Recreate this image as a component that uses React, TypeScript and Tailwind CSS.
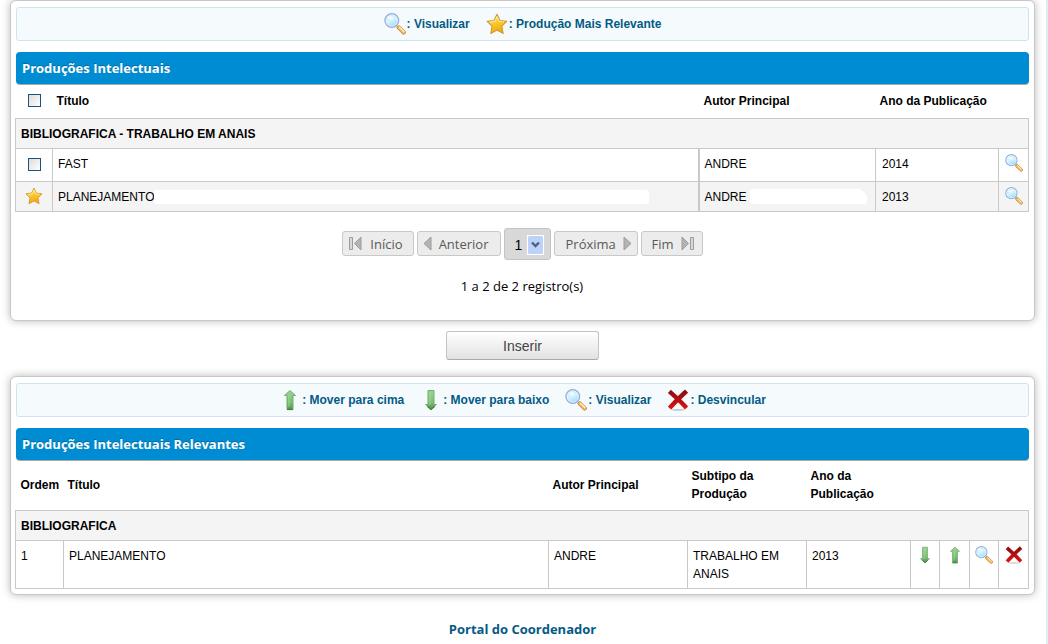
import { useId, type ReactNode } from "react";

type IconProps = { className?: string };

function Magnifier({ className = "size-[22px]" }: IconProps) {
  const id = useId();
  return (
    <svg viewBox="0 0 22 22" className={className} aria-hidden="true">
      <defs>
        <linearGradient id={`${id}g`} x1="0" y1="0" x2="0.5" y2="1">
          <stop offset="0" stopColor="#a9defa" />
          <stop offset="0.55" stopColor="#d9f3ff" />
          <stop offset="1" stopColor="#a4dcf8" />
        </linearGradient>
      </defs>
      <path d="M13 13.2l2 2" stroke="#9a9a9a" strokeWidth="2" />
      <path d="M14.8 14.6l5 4.8" stroke="#c28a4a" strokeWidth="4.2" strokeLinecap="round" />
      <path d="M15 14.6l4.8 4.7" stroke="#f6bf62" strokeWidth="2.8" strokeLinecap="round" />
      <path d="M15.6 14.4l4.300 4.100" stroke="#fff0cf" strokeWidth="1.2" strokeLinecap="round" />
      <circle cx="7.800" cy="7.500" r="6.800" fill={`url(#${id}g)`} stroke="#93add6" strokeWidth="1.400" />
      <circle cx="7.800" cy="7.500" r="5.800" fill="none" stroke="#eef8ff" strokeWidth="0.7" />
      <ellipse cx="6.400" cy="4.700" rx="3" ry="1.900" fill="#ffffff" opacity="0.65" />
    </svg>
  );
}

function Star({ className = "size-[22px]" }: IconProps) {
  const id = useId();
  return (
    <svg viewBox="0 0 22 22" className={className} aria-hidden="true">
      <defs>
        <linearGradient id={`${id}s`} x1="0" y1="0" x2="0.3" y2="1">
          <stop offset="0" stopColor="#ffe98a" />
          <stop offset="0.5" stopColor="#fccb2f" />
          <stop offset="1" stopColor="#f5a80c" />
        </linearGradient>
      </defs>
      <path
        d="M11 1.3l2.9 6.2 6.9.9-5 4.8 1.4 7.3-6.2-3.5-6.2 3.5 1.3-7.3-5-4.8 6.9-.9z"
        fill={`url(#${id}s)`}
        stroke="#cf9a3a"
        strokeWidth="1.1"
        strokeLinejoin="round"
      />
      <path d="M11 3.6l2.1 4.8 5 .7M11 3.6L8.9 8.4l-5 .7" fill="none" stroke="#fff3b8" strokeWidth="0.8" />
    </svg>
  );
}

function Arrow({ className = "size-[22px]", down = false }: IconProps & { down?: boolean }) {
  const id = useId();
  return (
    <svg viewBox="0 0 22 22" className={className} aria-hidden="true">
      <defs>
        <linearGradient id={`${id}a`} x1="0" y1="0" x2="0" y2="1">
          <stop offset="0" stopColor="#9ad693" />
          <stop offset="0.6" stopColor="#7cc075" />
          <stop offset="1" stopColor="#4c984a" />
        </linearGradient>
      </defs>
      <path
        d={down ? "M8 1.500h6v14h2.500L11 20.500 5.500 15.500H8z" : "M11 1.500L16.500 6.500H14v14H8v-14H5.500z"}
        fill={`url(#${id}a)`}
        stroke="#76ad70"
        strokeWidth="1"
        strokeLinejoin="round"
      />
      <path d={down ? "M10 3v13" : "M10 6v12"} stroke="#a9dca2" strokeWidth="1" opacity="0.8" />
      <path d={down ? "M7.500 17.500L11 20.500 14.500 17.500" : "M8 20.500h6"} fill="none" stroke="#3f7f41" strokeWidth="1.200" />
    </svg>
  );
}

function Cross({ className = "size-[22px]" }: IconProps) {
  const id = useId();
  return (
    <svg viewBox="0 0 22 22" className={className} aria-hidden="true">
      <defs>
        <linearGradient id={`${id}x`} gradientUnits="userSpaceOnUse" x1="0" y1="2" x2="0" y2="19">
          <stop offset="0" stopColor="#8d0f12" />
          <stop offset="0.5" stopColor="#b50d10" />
          <stop offset="1" stopColor="#dc1212" />
        </linearGradient>
      </defs>
      <ellipse cx="11" cy="20.800" rx="7" ry="0.900" fill="#000000" opacity="0.2" />
      <path
        d="M4 3.800c4 3.500 10 9 14 13.500M18 3.500C13 8 8.500 12.500 4 17.500"
        fill="none"
        stroke={`url(#${id}x)`}
        strokeWidth="4.400"
        strokeLinecap="square"
      />
    </svg>
  );
}

function PagerArrow({ dir, bar = false }: { dir: "left" | "right"; bar?: boolean }) {
  return (
    <svg
      viewBox={bar ? "0 0 14 16" : "0 0 9 16"}
      className={bar ? "h-4 w-[14px]" : "h-4 w-[9px]"}
      aria-hidden="true"
    >
      <g fill="#b4b4b4" stroke="#9c9c9c" strokeWidth="1" strokeLinejoin="round">
        {bar && <path d={dir === "left" ? "M1.500 1.500h3v12h-3z" : "M9.500 1.500h3v12h-3z"} fill="#d8d8d8" />}
        {dir === "left" ? (
          <path d={bar ? "M13 1v13L6.500 7.500z" : "M8 1v13L1 7.500z"} />
        ) : (
          <path d={bar ? "M1 1v13l6.500-6.500z" : "M1 1v13l7-6.500z"} />
        )}
      </g>
    </svg>
  );
}

function Panel({ children, className }: { children: ReactNode; className: string }) {
  return (
    <section
      className={`ml-[10px] mr-[11px] rounded-md border border-[#c8c8c8] bg-white pl-1 pr-[5px] pt-[6px] shadow-[0_0_9px_rgba(0,0,0,0.28)] ${className}`}
    >
      {children}
    </section>
  );
}

function Legend({ items }: { items: { icon: ReactNode; text: string }[] }) {
  return (
    <ul className="ml-px flex h-[34px] items-center justify-center gap-4 rounded-[3px] border border-[#d0e3ef] bg-[#f5fafd] font-bold text-[#045a85]">
      {items.map((item) => (
        <li key={item.text} className="flex items-center gap-px">
          {item.icon}
          <span>: {item.text}</span>
        </li>
      ))}
    </ul>
  );
}

function Title({ children }: { children: ReactNode }) {
  return (
    <h2 className="ml-px mt-[11px] h-8 rounded-[4px] bg-[#008cd2] px-[6px] font-['Open_Sans',sans-serif] text-[13px] leading-8 font-bold text-white shadow-[0_1px_0_#a9a9a9] [text-shadow:0_-1px_0_rgba(0,0,0,0.25)]">
      {children}
    </h2>
  );
}

const cell = "border border-[#c9c9c9] px-[5px] align-top leading-[18px]";
const iconButton = "mx-auto block cursor-pointer";
const pagerButton =
  "flex h-[25px] items-center rounded-[3px] border border-[#c8c8c8] bg-[#ececec] text-[#5a5a5a]";
const pagerText = "pt-[3px]";
const checkbox =
  "mx-auto block size-[13px] appearance-none border border-[#1c5180] bg-linear-to-br from-[#dcdcd7] to-white checked:from-[#1c5180]";

function View() {
  return (
    <button type="button" aria-label="Visualizar" className={iconButton}>
      <Magnifier className="size-[18px]" />
    </button>
  );
}

export default function App() {
  return (
    <main className="min-h-screen border-r-2 border-[#e2ebf5] bg-white font-['Liberation_Sans',Arial,sans-serif] text-[12px] text-black">
      <Panel className="h-[321px]">
        <Legend
          items={[
            { icon: <Magnifier />, text: "Visualizar" },
            { icon: <Star />, text: "Produção Mais Relevante" },
          ]}
        />
        <Title>Produções Intelectuais</Title>
        <table className="w-full table-fixed border-collapse text-left">
          <colgroup>
            <col className="w-[37px]" />
            <col />
            <col className="w-[177px]" />
            <col className="w-[123px]" />
            <col className="w-[30px]" />
          </colgroup>
          <thead>
            <tr className="h-[34px]">
              <th>
                <input type="checkbox" aria-label="Selecionar todos" className={checkbox} />
              </th>
              <th className="px-1">Título</th>
              <th className="px-[5px]">Autor Principal</th>
              <th className="px-1">Ano da Publicação</th>
              <td />
            </tr>
          </thead>
          <tbody>
            <tr className="h-[30px] bg-[#f4f4f4]">
              <th colSpan={5} className="border border-[#c9c9c9] px-[5px] pt-[2px]">
                BIBLIOGRAFICA - TRABALHO EM ANAIS
              </th>
            </tr>
            <tr className="h-[33px]">
              <td className="border border-[#c9c9c9]">
                <input type="checkbox" aria-label="Selecionar FAST" className={checkbox} />
              </td>
              <td className={`${cell} border-r-2 pt-[6px]`}>FAST</td>
              <td className={`${cell} border-l-2 pt-[6px]`}>ANDRE</td>
              <td className={`${cell} pt-[6px] pl-[6px]`}>2014</td>
              <td className="border border-[#c9c9c9] align-top pt-[5px]">
                <View />
              </td>
            </tr>
            <tr className="h-[30px] bg-[#f4f4f4]">
              <td className="border border-[#c9c9c9]">
                <Star className="mx-auto block size-[18px]" />
              </td>
              <td className={`${cell} border-r-2 pt-[6px]`}>
                <div className="flex items-center pr-11">
                  PLANEJAMENTO
                  <span className="h-[14px] grow rounded-[3px] bg-white" />
                </div>
              </td>
              <td className={`${cell} border-l-2 pt-[6px]`}>
                <div className="flex items-center gap-[3px] pr-[3px]">
                  ANDRE
                  <span className="h-[15px] grow rounded-[3px] rounded-tr-[10px] bg-white" />
                </div>
              </td>
              <td className={`${cell} pt-[6px] pl-[6px]`}>2013</td>
              <td className="border border-[#c9c9c9] align-top pt-[5px]">
                <View />
              </td>
            </tr>
          </tbody>
        </table>

        <nav
          aria-label="Paginação"
          className="mt-4 flex items-center justify-center gap-[3px] font-['Open_Sans',sans-serif] text-[13px]"
        >
          <button type="button" className={`${pagerButton} w-[72px] justify-between pl-[5px] pr-[10px]`}>
            <PagerArrow dir="left" bar />
            <span className={pagerText}>Início</span>
          </button>
          <button type="button" className={`${pagerButton} w-[84px] justify-between pl-[5px] pr-[11px]`}>
            <PagerArrow dir="left" />
            <span className={pagerText}>Anterior</span>
          </button>
          <div className="relative h-8 w-[47px]">
            <select
              aria-label="Página"
              className="h-full w-full appearance-none rounded-[3px] border border-[#c4c4c4] bg-[#d8d8d8] pt-[3px] pl-[10px] font-['Liberation_Sans',Arial,sans-serif] text-[14px]"
            >
              <option>1</option>
            </select>
            <svg viewBox="0 0 17 20" className="pointer-events-none absolute top-[7px] right-[7px] h-5 w-[17px]" aria-hidden="true">
              <rect width="17" height="20" fill="#ffffff" />
              <rect x="1" y="1" width="15" height="18" rx="1.500" fill="#bcd2fb" />
              <path d="M5 7.500l3.500 3.500L12 7.500" fill="none" stroke="#4d6185" strokeWidth="2.400" />
            </svg>
          </div>
          <button type="button" className={`${pagerButton} w-[84px] justify-between pr-[5px] pl-[11px]`}>
            <span className={pagerText}>Próxima</span>
            <PagerArrow dir="right" />
          </button>
          <button type="button" className={`${pagerButton} w-[62px] justify-between pr-[7px] pl-[10px]`}>
            <span className={pagerText}>Fim</span>
            <PagerArrow dir="right" bar />
          </button>
        </nav>
        <p className="mt-4 text-center font-['Open_Sans',sans-serif] text-[13px] leading-5">1 a 2 de 2 registro(s)</p>
      </Panel>

      <div className="mr-[11px] ml-[10px] flex h-[55px] justify-center pt-[10px]">
        <button
          type="button"
          className="h-[29px] w-[153px] rounded-[3px] border border-[#c4c4c4] border-b-[#aaaaaa] bg-linear-to-b from-white to-[#e2e2e2] pt-[2px] text-[14px] text-[#444444]"
        >
          Inserir
        </button>
      </div>

      <Panel className="pb-[5px]">
        <Legend
          items={[
            { icon: <Arrow />, text: "Mover para cima" },
            { icon: <Arrow down />, text: "Mover para baixo" },
            { icon: <Magnifier />, text: "Visualizar" },
            { icon: <Cross />, text: "Desvincular" },
          ]}
        />
        <Title>Produções Intelectuais Relevantes</Title>
        <table className="w-full table-fixed border-collapse text-left">
          <colgroup>
            <col className="w-[48px]" />
            <col />
            <col className="w-[139px]" />
            <col className="w-[119px]" />
            <col className="w-[104px]" />
            <col className="w-[29px]" />
            <col className="w-[30px]" />
            <col className="w-[29px]" />
            <col className="w-[30px]" />
          </colgroup>
          <thead>
            <tr className="h-[50px] leading-[18px]">
              <th className="px-[5px]">Ordem</th>
              <th className="px-1">Título</th>
              <th className="px-1">Autor Principal</th>
              <th className="px-1">
                Subtipo da
                <br />
                Produção
              </th>
              <th className="px-1">
                Ano da
                <br />
                Publicação
              </th>
              <td colSpan={4} />
            </tr>
          </thead>
          <tbody>
            <tr className="h-[30px] bg-[#f4f4f4]">
              <th colSpan={9} className="border border-[#c9c9c9] px-[5px] pt-[2px]">
                BIBLIOGRAFICA
              </th>
            </tr>
            <tr className="h-[48px]">
              <td className={`${cell} pt-[6px]`}>1</td>
              <td className={`${cell} pt-[6px]`}>PLANEJAMENTO</td>
              <td className={`${cell} pt-[6px]`}>ANDRE</td>
              <td className={`${cell} pt-[6px]`}>TRABALHO EM ANAIS</td>
              <td className={`${cell} pt-[6px]`}>2013</td>
              <td className="border border-[#c9c9c9] pt-[5px] align-top">
                <button type="button" aria-label="Mover para baixo" className={iconButton}>
                  <Arrow down className="size-[18px]" />
                </button>
              </td>
              <td className="border border-[#c9c9c9] pt-[5px] align-top">
                <button type="button" aria-label="Mover para cima" className={iconButton}>
                  <Arrow className="size-[18px]" />
                </button>
              </td>
              <td className="border border-[#c9c9c9] pt-[5px] align-top">
                <View />
              </td>
              <td className="border border-[#c9c9c9] pt-[5px] align-top">
                <button type="button" aria-label="Desvincular" className={iconButton}>
                  <Cross className="size-[18px]" />
                </button>
              </td>
            </tr>
          </tbody>
        </table>
      </Panel>

      <div className="mt-6 mr-[11px] ml-[10px] flex justify-center font-['Open_Sans',sans-serif] text-[13px] leading-5 font-bold">
        <a href="#portal" className="text-[#045a85]">
          Portal do Coordenador
        </a>
      </div>
    </main>
  );
}
